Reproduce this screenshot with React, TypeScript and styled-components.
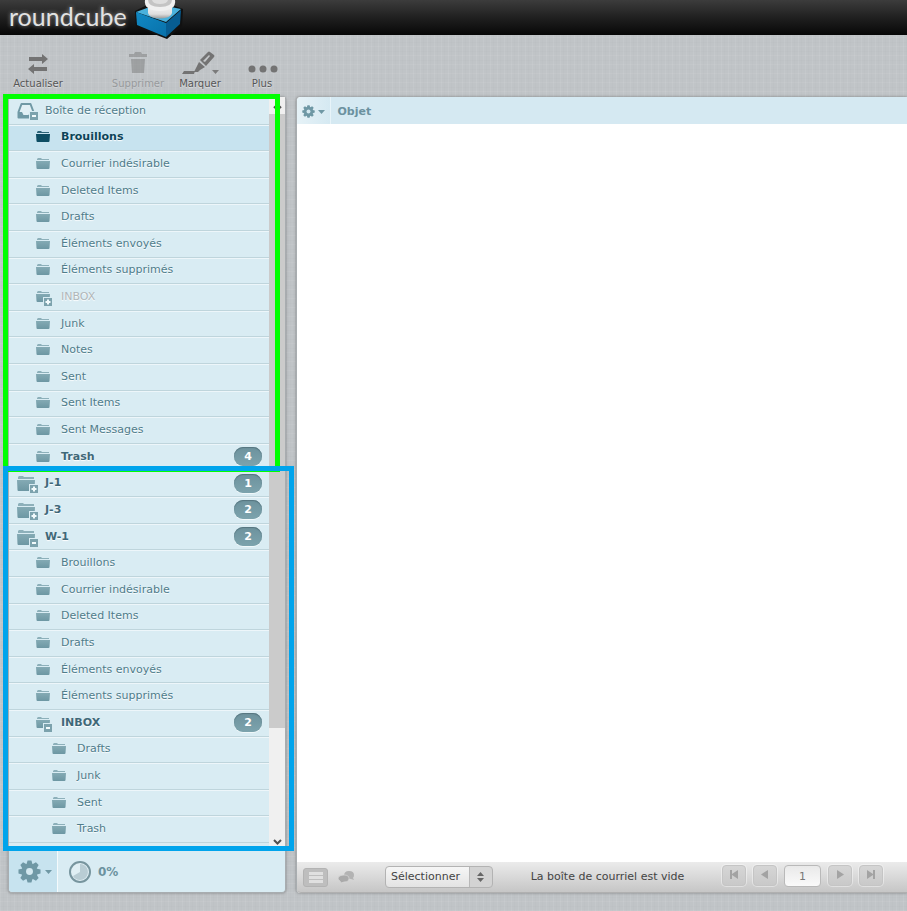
import React, { useState } from "react";
import styled, { createGlobalStyle, css } from "styled-components";

const GlobalStyle = createGlobalStyle`
  * { box-sizing: border-box; }
  html, body { margin: 0; padding: 0; }
  body {
    font: 11px/16px "DejaVu Sans", Verdana, sans-serif;
    color: #4a7280;
    background-color: #c0c4c7;
    background-image:
      repeating-linear-gradient(90deg, rgba(255,255,255,.07) 0 1px, transparent 1px 3px, rgba(0,0,0,.01) 3px 4px, transparent 4px 7px),
      repeating-linear-gradient(0deg, rgba(255,255,255,.06) 0 1px, transparent 1px 4px, rgba(0,0,0,.01) 4px 5px, transparent 5px 9px);
  }
  button, input, select { font: inherit; color: inherit; margin: 0; }
`;

const Page = styled.div`
  min-height: 100vh;
  display: flex;
  flex-direction: column;
  overflow: hidden;
`;

const TopBar = styled.header`
  height: 35px;
  flex: none;
  display: flex;
  align-items: flex-start;
  gap: 8px;
  padding-left: 9px;
  background: linear-gradient(#3c3c3c, #202020 50%, #070707);
`;

const Brand = styled.span`
  font: 400 25px/32px "Lato", sans-serif;
  color: #e2e2e2;
  text-shadow: 0 0 4px rgba(255, 255, 255, 0.55);
`;

const CubeSvg = styled.svg`
  flex: none;
  overflow: visible;
`;

const Toolbar = styled.nav`
  height: 62px;
  flex: none;
  display: flex;
  padding: 14px 0 0 7px;
`;

const ToolButton = styled.button<{ $dim?: boolean; $spaced?: boolean }>`
  width: 62px;
  margin-right: ${(p) => (p.$spaced ? "38px" : "0")};
  padding: 0;
  border: 0;
  background: none;
  display: flex;
  flex-direction: column;
  align-items: center;
  justify-content: flex-start;
  font-size: 10px;
  line-height: 14px;
  color: #555;
  text-shadow: 0 1px 1px rgba(255, 255, 255, 0.5);
  opacity: ${(p) => (p.$dim ? 0.38 : 1)};
`;

const Main = styled.div`
  flex: 1;
  display: flex;
  gap: 10px;
  padding: 0 0 18px 8px;
`;

const Sidebar = styled.aside`
  position: relative;
  flex: none;
  width: 278px;
  display: flex;
  flex-direction: column;
  border: 1px solid #a8adb0;
  border-top: 0;
  border-radius: 4px;
  background: #d9ecf3;
  box-shadow: 0 0 3px rgba(80, 80, 80, 0.6);
`;

const SidebarBody = styled.div`
  flex: 1;
  display: flex;
`;

const FolderList = styled.ul`
  flex: 1;
  margin: 0;
  padding: 1px 0 7px;
  list-style: none;
  display: grid;
  grid-auto-rows: 1fr;
`;

const FolderItem = styled.li<{ $selected?: boolean }>`
  display: flex;
  border-bottom: 1px solid #bfd5dc;
  box-shadow: inset 0 1px 0 #edf6fa;
  ${(p) => p.$selected && css`background: #c7e3ef;`}
`;

const levelPadding = [8, 27, 43];

type Tone = "normal" | "selected" | "virtual";

const FolderLink = styled.a<{ $level: number; $tone: Tone; $bold?: boolean }>`
  flex: 1;
  display: flex;
  align-items: center;
  padding: 0 7px 0 ${(p) => levelPadding[p.$level]}px;
  text-decoration: none;
  font-weight: ${(p) => (p.$bold ? 700 : 400)};
  color: ${(p) => (p.$tone === "selected" ? "#0b4458" : p.$tone === "virtual" ? "#b0b6b8" : p.$bold ? "#3f6878" : "#4f7c8a")};
  text-shadow: 0 1px 1px #fff;
`;

const IconSlot = styled.span<{ $level: number }>`
  flex: none;
  display: flex;
  width: ${(p) => (p.$level === 0 ? 28 : 25)}px;
`;

const FolderName = styled.span`
  flex: 1;
`;

const Badge = styled.span`
  width: 28px;
  height: 19px;
  border-radius: 9px;
  text-align: center;
  line-height: 19px;
  font-weight: 700;
  color: #fff;
  text-shadow: none;
  background: linear-gradient(#6d929d, #7ca3ad);
  box-shadow: inset 0 1px 1px #55757f, 0 1px 0 #f0f8fa;
`;

const ScrollTrack = styled.div`
  width: 16px;
  flex: none;
  display: flex;
  flex-direction: column;
  background: #f0f0f0;
`;

const ScrollArrow = styled.span`
  height: 17px;
  display: flex;
  align-items: center;
  justify-content: center;
`;

const ScrollThumb = styled.div`
  flex: 614;
  background: #cbcbcb;
`;

const ScrollRest = styled.div`
  flex: 105;
`;

const SidebarFooter = styled.div`
  height: 42px;
  flex: none;
  display: flex;
  border-top: 1px solid #f4fafc;
`;

const GearButton = styled.button`
  width: 49px;
  padding: 0 0 0 9px;
  border: 0;
  border-right: 1px solid #f4fafc;
  border-radius: 0 0 0 4px;
  background: #c7e3ef;
  display: flex;
  align-items: center;
  gap: 4px;
`;

const Quota = styled.div`
  display: flex;
  align-items: center;
  gap: 6px;
  padding-left: 10px;
  font-size: 12px;
  font-weight: 700;
  color: #6c929f;
`;

const Frame = styled.div<{ $kind: "personal" | "shared" }>`
  position: absolute;
  pointer-events: none;
  ${(p) =>
    p.$kind === "personal"
      ? css`inset: -3px 5px 420px -6px; border: 5px solid #00ff00;`
      : css`inset: 369px -9px 41px -6px; border: 5px solid #00a4ec;`}
`;

const MailPanel = styled.main`
  flex: 1;
  display: flex;
  flex-direction: column;
  border-left: 1px solid #a8adb0;
  border-radius: 4px 0 0 4px;
  background: #fff;
  box-shadow: 0 0 3px rgba(80, 80, 80, 0.6);
`;

const MailArea = styled.div`
  flex: 1;
`;

const MailTable = styled.table`
  width: 100%;
  border-collapse: collapse;

  th {
    height: 27px;
    padding: 2px 0 0 7px;
    text-align: left;
    color: #6b919f;
    background: #d5e9f2;
  }
  th:first-child {
    width: 33px;
    padding: 2px 0 0 5px;
    border-right: 1px solid #e8f4f9;
    background: linear-gradient(90deg, #e6f2f7, #d5e9f2);
    border-radius: 4px 0 0 0;
  }
`;

const OptionsButton = styled.button`
  display: flex;
  align-items: center;
  gap: 3px;
  padding: 0;
  border: 0;
  background: none;
`;

const MailFooter = styled.footer`
  height: 31px;
  flex: none;
  display: flex;
  align-items: center;
  padding: 0 24px 0 6px;
  background: linear-gradient(#ebebeb, #c6c6c6);
  border-bottom: 1px solid #b0b0b0;
  border-radius: 0 0 0 4px;
  color: #444;
`;

const ModeButton = styled.button<{ $active?: boolean }>`
  width: ${(p) => (p.$active ? 25 : 36)}px;
  height: 19px;
  padding: 0;
  border: ${(p) => (p.$active ? "1px solid #b3b3b3" : "0")};
  border-radius: 3px;
  background: ${(p) => (p.$active ? "#bebebe" : "none")};
  display: flex;
  align-items: center;
  justify-content: center;
`;

const SelectBox = styled.label`
  position: relative;
  width: 108px;
  height: 22px;
  margin-left: 21px;
  display: flex;
  border: 1px solid #b3b3b3;
  border-radius: 4px;
  background: linear-gradient(90deg, transparent 83px, #b8b8b8 83px 84px, #d3d3d3 84px), linear-gradient(#f6f6f6, #e3e3e3);

  select {
    flex: 1;
    width: 100%;
    padding: 0 0 0 5px;
    border: 0;
    appearance: none;
    background: none;
  }
  svg {
    position: absolute;
    right: 7px;
    top: 4px;
    pointer-events: none;
  }
`;

const Status = styled.span`
  flex: 1;
  text-align: center;
  white-space: nowrap;
`;

const Pager = styled.div`
  display: flex;
  gap: 7px;
  padding-bottom: 2px;
`;

const PageButton = styled.button`
  width: 24px;
  height: 21px;
  padding: 0 0 2px;
  border: 1px solid #c5c5c5;
  border-radius: 4px;
  background: linear-gradient(#d6d6d6, #c9c9c9);
  box-shadow: 0 0 0 1px rgba(255, 255, 255, 0.4);
  display: flex;
  align-items: center;
  justify-content: center;
`;

const PageInput = styled.input`
  width: 37px;
  height: 22px;
  padding: 0;
  border: 1px solid #b9b9b9;
  border-radius: 4px;
  text-align: center;
  color: #777;
  background: linear-gradient(#e9e9e9, #fafafa);
`;

function Caret({ color }: { color: string }) {
  return (
    <svg width="7" height="4" viewBox="0 0 7 4" aria-hidden="true">
      <path d="M0 0h7L3.5 4z" fill={color} />
    </svg>
  );
}

function Gear({ size, color }: { size: number; color: string }) {
  return (
    <svg width={size} height={size} viewBox="-12 -12 24 24" aria-hidden="true">
      <g fill={color}>
        {[0, 45, 90, 135].map((a) => (
          <path key={a} transform={`rotate(${a})`} d="M-3-8-2-11.5H2L3-8V8L2 11.5H-2L-3 8z" />
        ))}
        <circle r="8.4" />
      </g>
      <circle r="3.6" fill="#d3e8f0" />
    </svg>
  );
}

function Mark({ open, x, y }: { open: boolean; x: number; y: number }) {
  return (
    <g transform={`translate(${x} ${y})`}>
      <rect x="-1" y="-1" width="10" height="10" fill="#d9ecf3" />
      <rect width="8" height="8" fill="#7ca2ad" />
      <path d={open ? "M2 3h4v2H2z" : "M3 1.5h2V3h1.500v2H5v1.500H3V5H1.500V3H3z"} fill="#f2fafc" />
    </g>
  );
}

type Mode = "open" | "closed" | undefined;

function FolderIcon({ large, mode, dark }: { large: boolean; mode: Mode; dark: boolean }) {
  const front = dark ? "#0d4d63" : "url(#folderFill)";
  const back = dark ? "#2d6478" : "#8db0ba";
  if (large) {
    return (
      <svg width="22" height="24" viewBox="0 -4 22 24" aria-hidden="true">
        <path d="M1 4V2l1-1h4l1 1h10v2z" fill={back} />
        <path d="M0 5h18l-.5 10q0 1-1 1h-15q-1 0-1-1z" fill={front} />
        {mode && <Mark open={mode === "open"} x={13} y={10} />}
      </svg>
    );
  }
  return (
    <svg width="17" height="18" viewBox="0 0 17 18" aria-hidden="true">
      <path d="M1 5V4l1-1h3l1 1h7v1z" fill={back} />
      <path d="M0 6h14l-.5 7q0 1-1 1h-11q-1 0-1-1z" fill={front} />
      {mode && <Mark open={mode === "open"} x={8} y={10} />}
    </svg>
  );
}

function InboxIcon() {
  return (
    <svg width="22" height="22" viewBox="0 -2 22 22" aria-hidden="true">
      <path d="M4.500 2h9l3 8v5.500H1.500V10z" fill="#e2f0f5" stroke="#7099a5" strokeWidth="2" strokeLinejoin="round" />
      <path d="M1 10h4l1.500 3h5l1.500-3h4v6H1z" fill="#7099a5" />
      <Mark open x={13} y={10} />
    </svg>
  );
}

function Cube() {
  return (
    <CubeSvg width="49" height="39" viewBox="0 0 49 39" aria-hidden="true">
      <defs>
        <linearGradient id="bowl" x2="0" y2="1">
          <stop stopColor="#f4f4f4" />
          <stop offset=".65" stopColor="#dedede" />
          <stop offset="1" stopColor="#9a9a9a" />
        </linearGradient>
        <linearGradient id="left" x2="1" y2="1">
          <stop stopColor="#1189c4" />
          <stop offset="1" stopColor="#0871aa" />
        </linearGradient>
        <linearGradient id="folderFill" x2="0" y2="1">
          <stop stopColor="#84aab4" />
          <stop offset="1" stopColor="#6d97a3" />
        </linearGradient>
      </defs>
      <path d="M0 11 10 6V0h30v6l8 3-1 17-15 13L1 27z" fill="#111" />
      <path d="M1 12 12 8l24-1 10 2-15 13z" fill="#49b1dc" />
      <path d="M1 12l30 11v14L2 25z" fill="url(#left)" />
      <path d="M31 23 46 10l-1 14L31 37z" fill="#075d92" />
      <path d="M13 6q12 7 24 0v7q-1 3-5 4.500-7 2-14 0-4-1.500-5-4.500z" fill="url(#bowl)" />
      <path d="M10 0h30q1 5-3 8-5 3-12 3T13 8q-4-3-3-8z" fill="#f0f0f0" />
      <path d="M13 0h24q0 7-12 7T13 0z" fill="#c4c4c4" />
      <path d="M17 0h16q-1 4-8 4t-8-4z" fill="#dedede" />
    </CubeSvg>
  );
}

const toolIcons = {
  refresh: (
    <svg width="24" height="28" viewBox="0 0 24 28">
      <path d="M3 8h13V5l6 5-6 5v-3H3zM21 18H8v-3l-6 5 6 5v-3h13z" fill="#737373" />
    </svg>
  ),
  trash: (
    <svg width="24" height="28" viewBox="0 0 24 28">
      <path d="M3 8V5h5l1-2h6l1 2h5v3zM5 10h14l-1 14H6z" fill="#666" />
    </svg>
  ),
  marker: (
    <svg width="38" height="28" viewBox="0 0 38 28">
      <path d="M3 22h11l-1 3H1zM14 21l4-8 6 5-5 3-2 2h-4zM19 11l8-8q1-1 2 0l4 3q1 1 0 2l-8 9z" fill="#737373" />
      <path d="m22 12 6-6 1 1-5 6z" fill="#c4c7c9" />
      <path d="M31 21h7l-3.500 4z" fill="#7b7b7b" />
    </svg>
  ),
  more: (
    <svg width="32" height="28" viewBox="0 0 32 28">
      <circle cx="6" cy="20" r="3.500" fill="#737373" />
      <circle cx="17" cy="20" r="3.500" fill="#737373" />
      <circle cx="28" cy="20" r="3.500" fill="#737373" />
    </svg>
  ),
};

interface Folder {
  name: string;
  level: number;
  mode?: Mode;
  unread?: number;
  virtual?: boolean;
}

const folders: Folder[] = [
  { name: "Boîte de réception", level: 0, mode: "open" },
  { name: "Brouillons", level: 1 },
  { name: "Courrier indésirable", level: 1 },
  { name: "Deleted Items", level: 1 },
  { name: "Drafts", level: 1 },
  { name: "Éléments envoyés", level: 1 },
  { name: "Éléments supprimés", level: 1 },
  { name: "INBOX", level: 1, mode: "closed", virtual: true },
  { name: "Junk", level: 1 },
  { name: "Notes", level: 1 },
  { name: "Sent", level: 1 },
  { name: "Sent Items", level: 1 },
  { name: "Sent Messages", level: 1 },
  { name: "Trash", level: 1, unread: 4 },
  { name: "J-1", level: 0, mode: "closed", unread: 1 },
  { name: "J-3", level: 0, mode: "closed", unread: 2 },
  { name: "W-1", level: 0, mode: "open", unread: 2 },
  { name: "Brouillons", level: 1 },
  { name: "Courrier indésirable", level: 1 },
  { name: "Deleted Items", level: 1 },
  { name: "Drafts", level: 1 },
  { name: "Éléments envoyés", level: 1 },
  { name: "Éléments supprimés", level: 1 },
  { name: "INBOX", level: 1, mode: "open", unread: 2 },
  { name: "Drafts", level: 2 },
  { name: "Junk", level: 2 },
  { name: "Sent", level: 2 },
  { name: "Trash", level: 2 },
];

const pageIcons = {
  first: "M1 1h2v4l6-4v9L3 6v4H1z",
  previous: "M8 1v9L1 5.500z",
  next: "M2 1v9l7-4.500z",
  last: "M9 1H7v4L1 1v9l6-4v4h2z",
};

function PageNav({ icon, label }: { icon: keyof typeof pageIcons; label: string }) {
  return (
    <PageButton aria-label={label}>
      <svg width="10" height="11" viewBox="0 0 10 11" aria-hidden="true">
        <path d={pageIcons[icon]} fill="#a3a3a3" />
      </svg>
    </PageButton>
  );
}

export default function App() {
  const [selected, setSelected] = useState(1);
  const [page, setPage] = useState("1");

  return (
    <>
      <GlobalStyle />
      <Page>
        <TopBar>
          <Brand>roundcube</Brand>
          <Cube />
        </TopBar>
        <Toolbar>
          <ToolButton $spaced>{toolIcons.refresh}Actualiser</ToolButton>
          <ToolButton $dim>{toolIcons.trash}Supprimer</ToolButton>
          <ToolButton>{toolIcons.marker}Marquer</ToolButton>
          <ToolButton>{toolIcons.more}Plus</ToolButton>
        </Toolbar>
        <Main>
          <Sidebar>
            <SidebarBody>
              <FolderList>
                {folders.map((f, i) => {
                  const isSelected = i === selected;
                  return (
                    <FolderItem key={i} $selected={isSelected}>
                      <FolderLink
                        href="#"
                        $level={f.level}
                        $tone={isSelected ? "selected" : f.virtual ? "virtual" : "normal"}
                        $bold={isSelected || !!f.unread}
                        onClick={() => setSelected(i)}
                      >
                        <IconSlot $level={f.level}>
                          {i === 0 ? <InboxIcon /> : <FolderIcon large={f.level === 0} mode={f.mode} dark={isSelected} />}
                        </IconSlot>
                        <FolderName>{f.name}</FolderName>
                        {f.unread && <Badge>{f.unread}</Badge>}
                      </FolderLink>
                    </FolderItem>
                  );
                })}
              </FolderList>
              <ScrollTrack>
                <ScrollArrow>
                  <svg width="9" height="6" viewBox="0 0 9 6"><path d="m1 5 3.500-3.500L8 5" fill="none" stroke="#505050" strokeWidth="2" /></svg>
                </ScrollArrow>
                <ScrollThumb />
                <ScrollRest />
                <ScrollArrow>
                  <svg width="9" height="6" viewBox="0 0 9 6"><path d="m1 1 3.500 3.500L8 1" fill="none" stroke="#505050" strokeWidth="2" /></svg>
                </ScrollArrow>
              </ScrollTrack>
            </SidebarBody>
            <SidebarFooter>
              <GearButton aria-label="Actions du dossier">
                <Gear size={23} color="#6f98a5" />
                <Caret color="#6f98a5" />
              </GearButton>
              <Quota>
                <svg width="24" height="24" viewBox="-12 -12 24 24" aria-hidden="true">
                  <circle r="10" fill="#e0eff4" stroke="#77959e" strokeWidth="2" />
                  <path d="M0 0V-8A8 8 0 1 1-7 4z" fill="#b9cdd4" />
                </svg>
                0%
              </Quota>
            </SidebarFooter>
            <Frame $kind="personal" />
            <Frame $kind="shared" />
          </Sidebar>
          <MailPanel>
            <MailArea>
              <MailTable>
                <thead>
                  <tr>
                    <th>
                      <OptionsButton aria-label="Options de liste">
                        <Gear size={13} color="#6f98a5" />
                        <Caret color="#6f98a5" />
                      </OptionsButton>
                    </th>
                    <th>Objet</th>
                  </tr>
                </thead>
              </MailTable>
            </MailArea>
            <MailFooter>
              <ModeButton $active aria-label="Liste">
                <svg width="16" height="13" viewBox="0 0 16 13"><path d="M1 1h14v3H1zM1 5h14v3H1zM1 9h14v3H1z" fill="#e0e0e0" /></svg>
              </ModeButton>
              <ModeButton aria-label="Conversations">
                <svg width="17" height="14" viewBox="0 0 17 14">
                  <path d="M11 1q5 0 5 4 0 2-1 3l1 2-3-1q-6 0-7-3 0-5 5-5z" fill="#b3b3b3" />
                  <path d="M6 5q5 0 5 3.500T6 12l-3 1-1-2q-2-1-2-3 1-3 6-3z" fill="#aaa" stroke="#d8d8d8" strokeWidth=".7" />
                </svg>
              </ModeButton>
              <SelectBox>
                <select aria-label="Sélectionner" defaultValue="select">
                  <option value="select">Sélectionner</option>
                </select>
                <svg width="9" height="12" viewBox="0 0 9 12"><path d="m1 5 3.500-4L8 5zM1 7h7l-3.500 4z" fill="#666" /></svg>
              </SelectBox>
              <Status>La boîte de courriel est vide</Status>
              <Pager>
                <PageNav icon="first" label="Première page" />
                <PageNav icon="previous" label="Page précédente" />
                <PageInput aria-label="Page" value={page} onChange={(e) => setPage(e.target.value)} />
                <PageNav icon="next" label="Page suivante" />
                <PageNav icon="last" label="Dernière page" />
              </Pager>
            </MailFooter>
          </MailPanel>
        </Main>
      </Page>
    </>
  );
}
